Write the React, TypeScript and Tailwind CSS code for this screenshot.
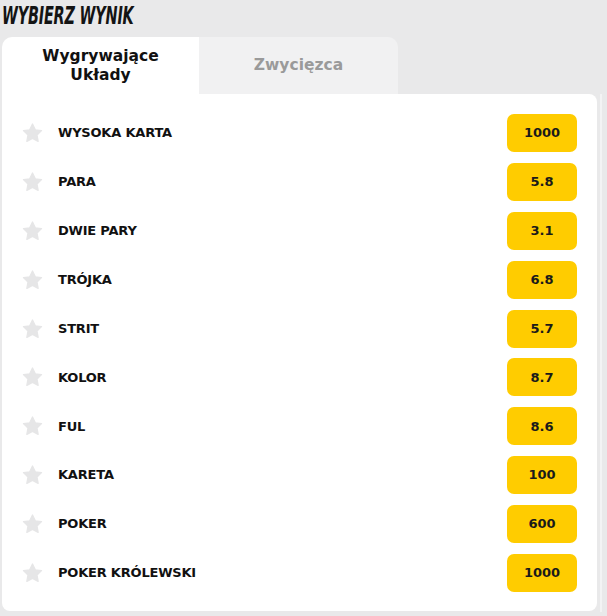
import React from "react";

const rows: [string, string][] = [
  ["WYSOKA KARTA", "1000"],
  ["PARA", "5.8"],
  ["DWIE PARY", "3.1"],
  ["TRÓJKA", "6.8"],
  ["STRIT", "5.7"],
  ["KOLOR", "8.7"],
  ["FUL", "8.6"],
  ["KARETA", "100"],
  ["POKER", "600"],
  ["POKER KRÓLEWSKI", "1000"],
];

function Star() {
  return (
    <svg width="21" height="20" viewBox="0 0 24 23" className="shrink-0">
      <path
        d="M12 1.2l3.2 6.6 7.2 1-5.2 5.1 1.3 7.2L12 17.7l-6.5 3.4 1.3-7.2L1.6 8.8l7.2-1z"
        fill="#e6e6e7"
        stroke="#e6e6e7"
        strokeWidth="1.5"
        strokeLinejoin="round"
      />
    </svg>
  );
}

export default function App() {
  return (
    <div className="w-[607px] h-[616px] bg-[#e9e9ea] overflow-hidden relative" style={{ fontFamily: "'DejaVu Sans', sans-serif" }}>
      <div className="pl-[2px] pt-[2px] h-[37px]">
        <div
          className="inline-block origin-left scale-x-[0.6] text-[24px] leading-[28px] font-bold italic text-[#141414] tracking-[-0.3px] whitespace-nowrap"
          style={{ fontFamily: "'DejaVu Sans', sans-serif" }}
        >
          WYBIERZ WYNIK
        </div>
      </div>
      <div className="ml-[2px] w-[595px]">
        <div className="flex h-[57px]">
          <div className="w-[197px] bg-white rounded-tl-[10px] flex items-center justify-center text-center text-[15.5px] leading-[19px] font-bold text-[#111]">
            Wygrywające<br />Układy
          </div>
          <div className="w-[199px] bg-[#f1f1f2] rounded-tr-[10px] flex items-center justify-center text-[15.5px] font-bold text-[#9a9a9a]">
            Zwycięzca
          </div>
        </div>
        <div className="bg-white rounded-b-[8px] rounded-tr-[8px] h-[517px] pt-[20px] flex flex-col gap-[10.9px]">
          {rows.map(([name, val]) => (
            <div key={name} className="flex items-center h-[38px] pl-[20px] pr-[20px]">
              <Star />
              <div className="ml-[15px] flex-1 text-[13px] font-bold text-[#111] tracking-[-0.2px]">{name}</div>
              <div className="w-[70px] h-[38px] rounded-[7px] bg-[#ffcc00] flex items-center justify-center text-[13px] font-bold text-[#1a1a1a]">
                {val}
              </div>
            </div>
          ))}
        </div>
      </div>
      <div className="absolute top-[94px] right-[5px] w-[2px] h-[518px] bg-[#f3f3f4]" />
    </div>
  );
}
